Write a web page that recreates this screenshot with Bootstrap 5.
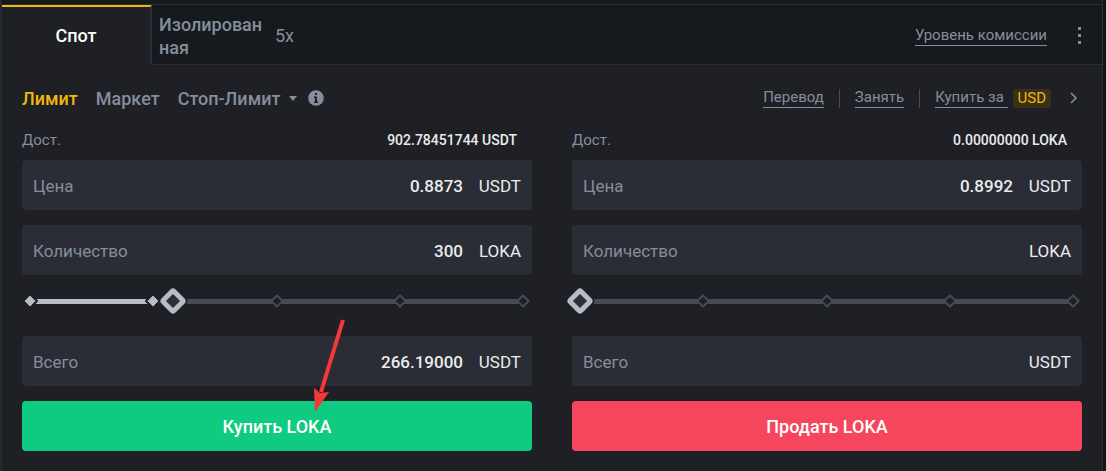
<!DOCTYPE html>
<html lang="ru">
<head>
<meta charset="utf-8">
<meta name="viewport" content="width=device-width, initial-scale=1">
<title>Спот</title>
<link href="https://cdn.jsdelivr.net/npm/bootstrap@5.3.0/dist/css/bootstrap.min.css" rel="stylesheet">
<style>
:root { --panel: #1f2026; --header: #161a1e; --line: #2a2e37; --muted: #848e9c; --field: #2b2d36; --gold: #f0b90b; --bright: #eaecef; --step: #474d57; --knob: #b7bdc6; }
body { background: #12161c; font-family: Roboto, "Liberation Sans", sans-serif; font-size: 18px; line-height: 23px; color: var(--bright); }
.trade { background: var(--panel); border-left: 2px solid #252930; border-right: 1px solid var(--line); margin-right: 3px; min-height: 100vh; }
.strip-top { height: 5px; background: var(--header); border-bottom: 1px solid var(--line); }
.mode-bar { background: var(--header); height: 60px; }
.mode-btn { border: 0; background: none; color: var(--muted); padding: 0; font-weight: 500; }
.mode-spot { width: 150px; background: var(--panel); color: #fff; border-top: 2px solid var(--gold); border-right: 2px solid var(--line); padding-bottom: 2px; }
.mode-rest { border-bottom: 1px solid var(--line); padding: 2px 14px 0 7px; }
.mode-iso { width: 106px; text-align: left; word-break: break-all; }
.mode-times { margin-left: 10px; }
.util-link { color: var(--muted); font-size: 15px; line-height: 19px; text-decoration: none; border-bottom: 1px solid var(--muted); white-space: pre; }
.util-link:hover { color: var(--bright); }
.order-bar { height: 66px; padding: 0 20px; }
.order-bar .current { color: var(--gold); }
.order-types { gap: 18px; }
.split { width: 1px; height: 19px; background: var(--step); margin: 0 15px; }
.usd { background: #3a301a; color: var(--gold); font-size: 15px; line-height: 19px; padding: 0 5px; border-radius: 3px; margin-left: 5px; }
.sides { display: grid; grid-template-columns: 1fr 1fr; column-gap: 40px; padding: 0 20px; }
.avail { height: 29px; padding-right: 15px; font-size: 15px; line-height: 18px; }
.avail-sum { font-size: 14px; font-weight: 500; }
.muted { color: var(--muted); }
.entry { background: var(--field); height: 50px; border-radius: 4px; padding: 2px 11px 0; margin-bottom: 15px; font-size: 17px; }
.entry input { flex: 1; min-width: 0; background: none; border: 0; outline: 0; color: var(--bright); text-align: right; font-weight: 500; padding: 0; margin-right: 14px; }
.unit { width: 44px; display: flex; justify-content: flex-end; }
.slide { height: 46px; position: relative; }
.steps { height: 22px; padding: 0 4px 0 3px; }
.gem { width: 10px; height: 10px; flex: none; border: 2px solid var(--step); transform: rotate(45deg); border-radius: 1px; }
.gem.on { background: var(--knob); border-color: var(--panel); background-clip: padding-box; width: 12px; height: 12px; margin: 0 -1px; position: relative; }
.seg { flex: 1; height: 5px; background: var(--step); }
.seg.on { background: var(--knob); }
.slide input { position: absolute; left: -2px; width: calc(100% + 3px); top: 0; height: 22px; margin: 0; appearance: none; background: none; }
.slide input::-webkit-slider-thumb { appearance: none; width: 20px; height: 20px; background: #2b3139; border: 5px solid var(--knob); border-radius: 4px; transform: rotate(45deg); box-shadow: 0 0 0 2px var(--panel); }
.slide input::-moz-range-thumb { box-sizing: border-box; width: 20px; height: 20px; background: #2b3139; border: 5px solid var(--knob); border-radius: 4px; transform: rotate(45deg); }
.act { height: 50px; width: 100%; border: 0; border-radius: 4px; color: #fff; font-weight: 500; padding: 0; font-size: 18px; }
.act-buy, .act-buy:hover { background: #0ecb81; color: #fff; }
.act-sell, .act-sell:hover { background: #f6465d; color: #fff; }
.pointer-arrow { position: absolute; left: calc(50% + 35px); bottom: 38px; pointer-events: none; }
</style>
</head>
<body>
<main class="trade">
  <div class="strip-top"></div>
  <header class="mode-bar d-flex">
    <button type="button" class="mode-btn mode-spot">Спот</button>
    <div class="mode-rest d-flex align-items-center flex-grow-1">
      <button type="button" class="mode-btn mode-iso">Изолированная</button>
      <span class="muted mode-times">5x</span>
      <a href="#" class="util-link ms-auto">Уровень комиссии</a>
      <button type="button" class="mode-btn d-flex ms-4" aria-label="Ещё"><svg width="17" height="18" viewBox="0 0 17 18" fill="currentColor"><path d="M7 0h3v3H7zM7 7h3v3H7zM7 14h3v3H7z"/></svg></button>
    </div>
  </header>
  <nav class="order-bar d-flex align-items-center">
    <div class="order-types d-flex">
      <button type="button" class="mode-btn current">Лимит</button>
      <button type="button" class="mode-btn">Маркет</button>
      <button type="button" class="mode-btn d-flex align-items-center">Стоп-Лимит
        <svg class="ms-2" width="10" height="6" viewBox="0 0 10 6" fill="currentColor"><path d="M1 1h8L5 6z"/></svg></button>
    </div>
    <svg class="ms-2 muted" width="22" height="16" viewBox="0 0 22 16" aria-hidden="true"><circle cx="10" cy="8" r="7.8" fill="currentColor"/><path d="M9 3h2v2H9zM8 6.500h3v5h1V13H8v-1.500h1V8H8z" fill="#1f2026"/></svg>
    <div class="d-flex align-items-center ms-auto">
      <a href="#" class="util-link">Перевод</a><span class="split"></span>
      <a href="#" class="util-link">Занять</a><span class="split"></span>
      <a href="#" class="util-link">Купить за </a><span class="usd">USD</span>
      <svg class="ms-3 muted" width="15" height="14" viewBox="0 0 15 14" fill="none" stroke="currentColor" stroke-width="1.600"><path d="M4 2l5 5-5 5"/></svg>
    </div>
  </nav>
  <div class="sides">
    <form>
      <div class="avail d-flex justify-content-between"><span class="muted">Дост.</span><span class="avail-sum">902.78451744 USDT</span></div>
      <div class="entry d-flex align-items-center"><label class="muted" for="bp">Цена</label><input id="bp" value="0.8873"><span class="unit">USDT</span></div>
      <div class="entry d-flex align-items-center"><label class="muted" for="bq">Количество</label><input id="bq" value="300"><span class="unit">LOKA</span></div>
      <div class="slide">
        <div class="steps d-flex align-items-center"><i class="gem on"></i><i class="seg on"></i><i class="gem on"></i><i class="seg"></i><i class="gem"></i><i class="seg"></i><i class="gem"></i><i class="seg"></i><i class="gem"></i></div>
        <input type="range" min="0" max="100" value="29" aria-label="Доля баланса для покупки">
      </div>
      <div class="entry d-flex align-items-center"><label class="muted" for="bt">Всего</label><input id="bt" value="266.19000"><span class="unit">USDT</span></div>
      <div class="position-relative">
        <button type="button" class="btn act act-buy">Купить LOKA</button>
        <svg class="pointer-arrow" width="34" height="94" viewBox="0 0 34 94" aria-hidden="true"><path d="M31 1L9 73" stroke="#f5393b" stroke-width="4"/><path d="M2 69l6 5 9-1L3 93z" fill="#f5393b"/></svg>
      </div>
    </form>
    <form>
      <div class="avail d-flex justify-content-between"><span class="muted">Дост.</span><span class="avail-sum">0.00000000 LOKA</span></div>
      <div class="entry d-flex align-items-center"><label class="muted" for="sp">Цена</label><input id="sp" value="0.8992"><span class="unit">USDT</span></div>
      <div class="entry d-flex align-items-center"><label class="muted" for="sq">Количество</label><input id="sq" value=""><span class="unit">LOKA</span></div>
      <div class="slide">
        <div class="steps d-flex align-items-center"><i class="gem"></i><i class="seg"></i><i class="gem"></i><i class="seg"></i><i class="gem"></i><i class="seg"></i><i class="gem"></i><i class="seg"></i><i class="gem"></i></div>
        <input type="range" min="0" max="100" value="0" aria-label="Доля баланса для продажи">
      </div>
      <div class="entry d-flex align-items-center"><label class="muted" for="st">Всего</label><input id="st" value=""><span class="unit">USDT</span></div>
      <button type="button" class="btn act act-sell">Продать LOKA</button>
    </form>
  </div>
</main>
<script src="https://cdn.jsdelivr.net/npm/bootstrap@5.3.0/dist/js/bootstrap.bundle.min.js"></script>
</body>
</html>
